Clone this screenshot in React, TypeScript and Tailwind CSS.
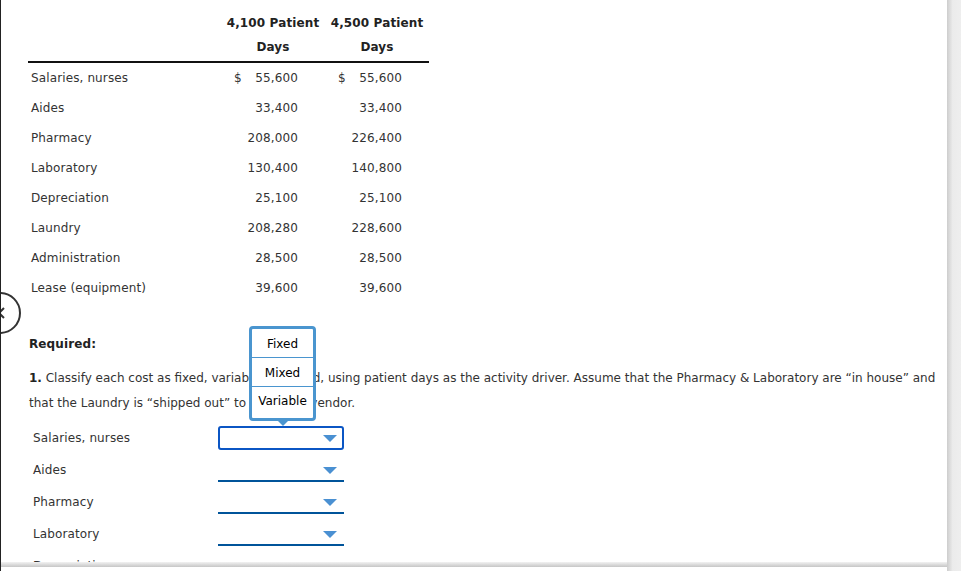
import * as React from "react"

const costs = [
  { name: "Salaries, nurses", a: "55,600", b: "55,600", dollar: true },
  { name: "Aides", a: "33,400", b: "33,400" },
  { name: "Pharmacy", a: "208,000", b: "226,400" },
  { name: "Laboratory", a: "130,400", b: "140,800" },
  { name: "Depreciation", a: "25,100", b: "25,100" },
  { name: "Laundry", a: "208,280", b: "228,600" },
  { name: "Administration", a: "28,500", b: "28,500" },
  { name: "Lease (equipment)", a: "39,600", b: "39,600" },
]

const answers = ["Salaries, nurses", "Aides", "Pharmacy", "Laboratory", "Depreciation"]

function Caret() {
  return (
    <svg width="14" height="7" viewBox="0 0 14 7" className="shrink-0">
      <path d="M0 0 L14 0 L7 7 Z" fill="#4a90d2" />
    </svg>
  )
}

function ValueCell({ value, dollar }: { value: string; dollar?: boolean }) {
  return (
    <div className="flex items-center justify-between pl-[13px] pr-[27px]">
      <span>{dollar ? "$" : ""}</span>
      <span>{value}</span>
    </div>
  )
}

export default function App() {
  return (
    <div
      className="relative flex h-[571px] w-[961px] overflow-hidden bg-white text-[12px] tracking-[0.01em] text-[#333]"
      style={{ fontFamily: '"DejaVu Sans", Verdana, sans-serif' }}
    >
      <div className="flex w-[947px] flex-col border-l border-[#222]">
        <div className="relative h-[562px] overflow-hidden">
          {/* cost table */}
          <div className="ml-[27px] w-[401px]">
            <div className="grid grid-cols-[193px_104px_104px] border-b-2 border-[#111] pt-[11px] pb-[2px] font-bold leading-[24px] text-[#222]">
              <div />
              <div className="text-center">4,100 Patient<br />Days</div>
              <div className="text-center">4,500 Patient<br />Days</div>
            </div>
            {costs.map((c) => (
              <div key={c.name} className="grid h-[30px] grid-cols-[193px_104px_104px] items-center">
                <div className="pl-[3px]">{c.name}</div>
                <ValueCell value={c.a} dollar={c.dollar} />
                <ValueCell value={c.b} dollar={c.dollar} />
              </div>
            ))}
          </div>

          {/* question */}
          <div className="ml-[28px] mt-[31px] font-bold leading-[20px] text-[#222]">Required:</div>
          <p className="ml-[28px] mt-[12px] w-[915px] leading-[25px] tracking-normal">
            <b className="text-[#222]">1.</b> Classify each cost as fixed, variable, or mixed, using patient days as the activity driver. Assume that the Pharmacy &amp; Laboratory are “in house” and that the Laundry is “shipped out” to a laundry vendor.
          </p>

          <div className="mt-[6px] flex flex-col">
            {answers.map((name, i) => (
              <div key={name} className="flex h-[32px] items-center">
                <div className="w-[217px] pl-[32px]">{name}</div>
                {i === 0 ? (
                  <div className="flex h-[24px] w-[126px] items-center justify-end rounded-[3px] border-2 border-[#0b56c4] pr-[5px]">
                    <Caret />
                  </div>
                ) : (
                  <div className="flex h-[24px] w-[126px] items-center justify-end border-b-2 border-[#00549a] pr-[7px] pt-[2px]">
                    <Caret />
                  </div>
                )}
              </div>
            ))}
          </div>

          {/* open dropdown list */}
          <div className="absolute left-[248px] top-[326px] w-[67px]">
            <div className="rounded-[4px] border-[3px] border-[#4a95cf] bg-white text-center text-[12px] tracking-normal text-black">
              <div className="h-[29px] border-b border-[#4a95cf] pt-[6px] leading-[18px]">Fixed</div>
              <div className="h-[29px] border-b border-[#4a95cf] pt-[6px] leading-[18px]">Mixed</div>
              <div className="h-[31px] pt-[5px] leading-[18px]">Variable</div>
            </div>
            <svg width="12" height="6" viewBox="0 0 12 6" className="mx-auto -mt-px block">
              <path d="M0 0 L12 0 L6 6 Z" fill="#4a95cf" />
            </svg>
          </div>

          {/* side nav circle */}
          <div className="absolute left-[-22px] top-[292px] flex h-[42px] w-[42px] items-center justify-end rounded-full border-2 border-[#333] bg-white pr-[14px]">
            <svg width="8" height="12" viewBox="0 0 8 12">
              <path d="M7 1 L2 6 L7 11" fill="none" stroke="#333" strokeWidth="2" />
            </svg>
          </div>
        </div>
        <div className="h-[5px] bg-gradient-to-b from-[#f2f2f2] to-[#c6c6c6]" />
        <div className="flex-1 bg-white" />
      </div>
      <div className="w-[14px] bg-gradient-to-r from-[#cdcdcd] via-[#ebebeb] via-40% to-[#eeeeee]" />
    </div>
  )
}
